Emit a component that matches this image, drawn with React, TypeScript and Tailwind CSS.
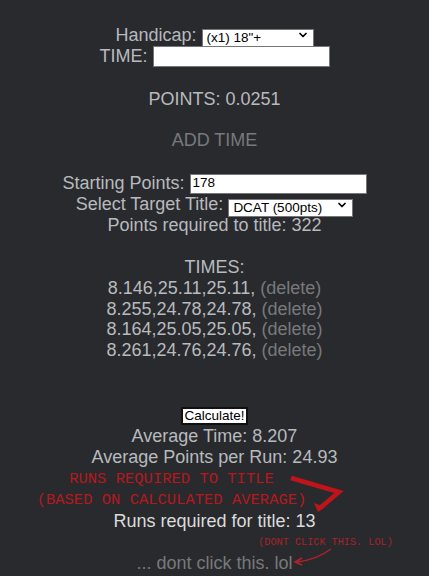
import { ChevronDown } from "lucide-react";

const times = [
  "8.146,25.11,25.11,",
  "8.255,24.78,24.78,",
  "8.164,25.05,25.05,",
  "8.261,24.76,24.76,",
];

function FakeSelect({ value, width }: { value: string; width: string }) {
  return (
    <div className={`relative h-[18px] ${width}`}>
      <select
        defaultValue={value}
        className="h-full w-full appearance-none border border-[#767676] bg-white pl-[4px] text-left text-[13.5px] leading-[16px] text-black"
      >
        <option>{value}</option>
      </select>
      <ChevronDown
        size={12}
        strokeWidth={3.5}
        className="pointer-events-none absolute right-[5px] top-[3px] text-black"
      />
    </div>
  );
}

export default function App() {
  return (
    <div className="relative min-h-[576px] bg-[#292a2d] pt-[24px] text-center font-['Liberation_Sans',Arial,sans-serif] text-[18px] leading-[20.7px] text-[#b7babe]">
      {/* TOP FORM */}
      <div className="flex h-[22px] items-center justify-center gap-[5px]">
        <span>Handicap:</span>
        <FakeSelect value={'(x1) 18"+'} width="w-[112px]" />
      </div>

      <div className="flex h-[21px] items-center justify-center gap-[5px]">
        <span>TIME:</span>
        <input className="h-[21px] w-[177px] border border-[#767676] bg-white text-[13px] text-black" />
      </div>

      <div className="mt-[22px] h-[21px]">POINTS: 0.0251</div>

      <div className="mt-[20px] h-[21px] text-[#77797c]">ADD TIME</div>

      {/* TARGET */}
      <div className="mt-[22px] flex h-[21px] items-center justify-center gap-[5px]">
        <span>Starting Points:</span>
        <input
          defaultValue="178"
          className="h-[20px] w-[177px] border border-[#767676] bg-white px-[2px] text-[13.5px] text-black"
        />
      </div>

      <div className="flex h-[21px] items-center justify-center gap-[5px]">
        <span>Select Target Title:</span>
        <FakeSelect value="DCAT (500pts)" width="w-[125px]" />
      </div>

      <div className="h-[21px]">Points required to title: 322</div>

      {/* TIMES */}
      <div className="mt-[21px] h-[21px]">TIMES:</div>
      {times.map((t) => (
        <div key={t} className="h-[20.5px]">
          {t} <span className="text-[#77797c]">(delete)</span>
        </div>
      ))}

      {/* RESULTS */}
      <div className="mt-[45px] flex h-[21px] items-center justify-center">
        <button className="h-[18px] border-2 border-[#111] bg-white px-[1px] text-[13.5px] leading-[14px] text-black">
          Calculate!
        </button>
      </div>

      <div className="h-[21px]">Average Time: 8.207</div>
      <div className="h-[21px]">Average Points per Run: 24.93</div>

      <div className="mt-[1px] mr-[86px] font-['Liberation_Mono',monospace] text-[15.5px] leading-[21px] text-[#b5181d]">
        <div>RUNS REQUIRED TO TITLE</div>
        <div>(BASED ON CALCULATED AVERAGE)</div>
      </div>

      <div className="h-[21px] text-[#dcdcdc]">Runs required for title: 13</div>

      <div className="ml-[222px] h-[21px] font-['Liberation_Mono',monospace] text-[10.2px] leading-[21px] text-[#a8232a]">
        (DONT CLICK THIS. LOL)
      </div>

      <div className="h-[21px] text-[#77797c]">... dont click this. lol</div>

      {/* scribbled arrows */}
      <svg
        className="pointer-events-none absolute left-0 top-0 h-[576px] w-[429px]"
        viewBox="0 0 429 576"
      >
        <path
          d="M291 478 L339 492 L320 508"
          fill="none"
          stroke="#c0141b"
          strokeWidth={4.5}
          strokeLinejoin="miter"
        />
        <path d="M314 503 L325 507 L318 512 Z" fill="#c0141b" />
        <path
          d="M331 549 Q316 560 297 562"
          fill="none"
          stroke="#b3232a"
          strokeWidth={1.5}
        />
        <path
          d="M302 558 L295 562 L302 565"
          fill="none"
          stroke="#b3232a"
          strokeWidth={1.5}
        />
      </svg>
    </div>
  );
}
